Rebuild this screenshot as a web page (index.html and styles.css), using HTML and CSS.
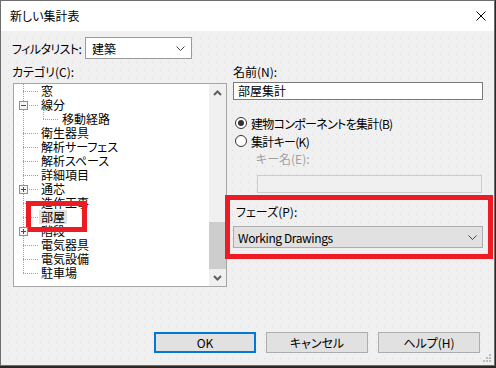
FILE: index.html
```html
<!DOCTYPE html>
<html lang="ja">
<head>
    <meta charset="UTF-8">
    <title>新しい集計表</title>
    <link rel="stylesheet" href="styles.css">
</head>
<body>

<div class="dialog">
    <div class="titlebar">
        <span class="title">新しい集計表</span>
        <svg class="close" width="10" height="10" viewBox="0 0 10 10">
            <path d="M0.5 0.5L9.5 9.5M9.5 0.5L0.5 9.5" stroke="#000" stroke-width="1"/>
        </svg>
    </div>

    <div class="content">
        <div class="filter-row">
            <span class="caption">フィルタリスト:</span>
            <div class="combo filter-combo">
                <span>建築</span>
                <svg class="chev" width="9" height="5" viewBox="0 0 9 5"><path d="M0.5 0.5L4.5 4.5L8.5 0.5" fill="none" stroke="#444"/></svg>
            </div>
        </div>

        <div class="columns">
            <div class="left">
                <div class="label">カテゴリ(C):</div>
                <div class="listbox">
                    <ul class="tree">
                        <li class="node"><span>窓</span></li>
                        <li class="node">
                            <svg class="exp" width="9" height="9" viewBox="0 0 9 9"><rect x="0.5" y="0.5" width="8" height="8" fill="#f4f4f4" stroke="#919191"/><path d="M2 4.5H7" stroke="#2b4f9e"/></svg>
                            <span>線分</span>
                        </li>
                        <li class="node child"><span>移動経路</span></li>
                        <li class="node"><span>衛生器具</span></li>
                        <li class="node"><span>解析サーフェス</span></li>
                        <li class="node"><span>解析スペース</span></li>
                        <li class="node"><span>詳細項目</span></li>
                        <li class="node">
                            <svg class="exp" width="9" height="9" viewBox="0 0 9 9"><rect x="0.5" y="0.5" width="8" height="8" fill="#f4f4f4" stroke="#919191"/><path d="M2 4.5H7M4.5 2V7" stroke="#2b4f9e"/></svg>
                            <span>通芯</span>
                        </li>
                        <li class="node"><span>造作工事</span></li>
                        <li class="node"><span class="selected">部屋</span></li>
                        <li class="node">
                            <svg class="exp" width="9" height="9" viewBox="0 0 9 9"><rect x="0.5" y="0.5" width="8" height="8" fill="#f4f4f4" stroke="#919191"/><path d="M2 4.5H7M4.5 2V7" stroke="#2b4f9e"/></svg>
                            <span>階段</span>
                        </li>
                        <li class="node"><span>電気器具</span></li>
                        <li class="node"><span>電気設備</span></li>
                        <li class="node"><span>駐車場</span></li>
                    </ul>
                    <div class="scrollbar">
                        <div class="sb-btn">
                            <svg width="9" height="6" viewBox="0 0 9 6"><path d="M1 5L4.5 1.5L8 5" fill="none" stroke="#606060" stroke-width="2"/></svg>
                        </div>
                        <div class="sb-track"><div class="sb-thumb"></div></div>
                        <div class="sb-btn">
                            <svg width="9" height="6" viewBox="0 0 9 6"><path d="M1 1L4.5 4.5L8 1" fill="none" stroke="#606060" stroke-width="2"/></svg>
                        </div>
                    </div>
                </div>
            </div>

            <div class="right">
                <div class="label">名前(N):</div>
                <div class="textbox">部屋集計</div>
                <div class="radio first">
                    <span class="dot checked"></span><span class="radio-text">建物コンポーネントを集計(B)</span>
                </div>
                <div class="radio">
                    <span class="dot"></span><span class="radio-text">集計キー(K)</span>
                </div>
                <div class="label key-label">キー名(E):</div>
                <div class="textbox disabled"></div>
                <div class="phase">
                    <div class="label">フェーズ(P):</div>
                    <div class="combo phase-combo">
                        <span class="phase-text">Working Drawings</span>
                        <svg class="chev" width="9" height="5" viewBox="0 0 9 5"><path d="M0.5 0.5L4.5 4.5L8.5 0.5" fill="none" stroke="#444"/></svg>
                    </div>
                </div>
            </div>
        </div>

        <div class="buttons">
            <button class="btn default">OK</button>
            <button class="btn">キャンセル</button>
            <button class="btn">ヘルプ(H)</button>
        </div>
    </div>

    <!-- annotation boxes drawn over the dialog -->
    <div class="mark mark-room"></div>
    <div class="mark mark-phase"></div>

    <svg class="grip" width="9" height="9" viewBox="0 0 9 9">
        <rect x="6" y="0" width="2" height="2" fill="#bdbdbd"/>
        <rect x="3" y="3" width="2" height="2" fill="#bdbdbd"/>
        <rect x="6" y="3" width="2" height="2" fill="#bdbdbd"/>
        <rect x="0" y="6" width="2" height="2" fill="#bdbdbd"/>
        <rect x="3" y="6" width="2" height="2" fill="#bdbdbd"/>
        <rect x="6" y="6" width="2" height="2" fill="#bdbdbd"/>
    </svg>
</div>

</body>
</html>
```

FILE: styles.css
```css
body {
    margin: 0;
    background-color: #2e2825;
    font-family: "Noto Sans CJK JP", "Noto Sans", sans-serif;
    font-size: 12px;
    font-feature-settings: "palt";
    color: #000;
}
.dialog {
    position: relative;
    width: 495px;
    height: 366px;
    box-sizing: border-box;
    border: 1px solid #6e6e6e;
    background-color: #f0f0f0;
    display: flex;
    flex-direction: column;
}
.titlebar {
    height: 30px;
    background-color: #fff;
    display: flex;
    align-items: center;
    justify-content: space-between;
    padding: 0 8px 0 9px;
}
.title {
    line-height: 14px;
}
.content {
    flex: 1;
    padding: 6px 11px 0 11px;
    background-color: #f0f0f0;
    background-image:
        linear-gradient(90deg, #f0f0f0 7px, transparent 7px),
        linear-gradient(180deg, transparent 7px, #d9d9d9 7px);
    background-size: 8px 8px;
}
.filter-row {
    display: flex;
    align-items: center;
    height: 22px;
}
.filter-row .caption {
    width: 73px;
    white-space: nowrap;
    letter-spacing: -0.6px;
}
.combo {
    display: flex;
    align-items: center;
    justify-content: space-between;
    box-sizing: border-box;
    height: 22px;
    border: 1px solid #9a9a9a;
    padding: 0 6px;
}
.filter-combo {
    width: 107px;
    background-color: #fff;
}
.columns {
    display: flex;
    gap: 6px;
    margin-top: 6px;
}
.left {
    width: 215px;
}
.right {
    width: 250px;
}
.label {
    height: 14px;
    line-height: 14px;
    white-space: nowrap;
}

/* category tree */
.listbox {
    margin: 4px 0 0 1px;
    width: 214px;
    height: 204px;
    box-sizing: border-box;
    border: 1px solid #a6a6a6;
    background-color: #fff;
    display: flex;
}
.tree {
    position: relative;
    flex: 1;
    margin: 0;
    padding: 0;
    list-style: none;
    overflow: hidden;
}
.tree::before {
    content: "";
    position: absolute;
    left: 9px;
    top: 0;
    height: 189px;
    border-left: 1px dotted #a0a0a0;
}
.node {
    position: relative;
    height: 14px;
    line-height: 14px;
    padding-left: 25px;
    white-space: nowrap;
}
.node::before {
    content: "";
    position: absolute;
    left: 9px;
    top: 7px;
    width: 15px;
    border-top: 1px dotted #a0a0a0;
}
.node span {
    display: inline-block;
    height: 14px;
    line-height: 14px;
    padding: 0 2px;
    vertical-align: top;
}
.node.child {
    padding-left: 46px;
}
.node.child::before {
    left: 29px;
}
.node.child::after {
    content: "";
    position: absolute;
    left: 29px;
    top: -4px;
    height: 11px;
    border-left: 1px dotted #a0a0a0;
}
.exp {
    position: absolute;
    left: 5px;
    top: 3px;
    z-index: 1;
}
.node span.selected {
    background-color: #e3e3e3;
}
.scrollbar {
    width: 17px;
    background-color: #f0f0f0;
    display: flex;
    flex-direction: column;
}
.sb-btn {
    height: 17px;
    display: flex;
    align-items: center;
    justify-content: center;
}
.sb-track {
    flex: 1;
    display: flex;
    flex-direction: column;
    justify-content: flex-end;
}
.sb-thumb {
    height: 47px;
    background-color: #cdcdcd;
}

/* right side */
.textbox {
    box-sizing: border-box;
    height: 18px;
    margin-top: 3px;
    border: 1px solid #7a7a7a;
    background-color: #fff;
    padding-left: 4px;
    line-height: 16px;
}
.radio {
    display: flex;
    align-items: center;
    height: 18px;
    gap: 4px;
    padding-left: 2px;
    white-space: nowrap;
}
.radio-text {
    letter-spacing: -0.7px;
}
.radio.first {
    margin-top: 14px;
}
.dot {
    width: 12px;
    height: 12px;
    box-sizing: border-box;
    border: 1px solid #333;
    border-radius: 50%;
    background-color: #fff;
    display: flex;
    align-items: center;
    justify-content: center;
}
.dot.checked::after {
    content: "";
    width: 6px;
    height: 6px;
    border-radius: 50%;
    background-color: #333;
}
.key-label {
    margin: 2px 0 0 23px;
    color: #a0a0a0;
}
.textbox.disabled {
    margin: 9px 0 0 24px;
    width: 225px;
    background-color: #f0f0f0;
    border-color: #cccccc;
}
.phase {
    margin-top: 12px;
}
.phase .label {
    padding-left: 3px;
}
.phase-combo {
    margin-top: 7px;
    background-color: #e1e1e1;
    border-color: #adadad;
    padding: 0 5px 0 4px;
}
.phase-text {
    letter-spacing: -0.4px;
}

.buttons {
    display: flex;
    justify-content: flex-end;
    gap: 10px;
    margin-top: 45px;
    padding-right: 3px;
}
.btn {
    width: 102px;
    height: 21px;
    box-sizing: border-box;
    border: 1px solid #adadad;
    background-color: #e1e1e1;
    font-family: inherit;
    font-size: 12px;
    font-feature-settings: "palt";
    color: #000;
    padding: 0;
}
.btn.default {
    border: 2px solid #0078d7;
}

.mark {
    position: absolute;
    box-sizing: border-box;
    border: 5px solid #ed1c24;
}
.mark-room {
    left: 25px;
    top: 200px;
    width: 61px;
    height: 31px;
}
.mark-phase {
    left: 224px;
    top: 194px;
    width: 268px;
    height: 64px;
}
.grip {
    position: absolute;
    right: 2px;
    bottom: 2px;
}
```
